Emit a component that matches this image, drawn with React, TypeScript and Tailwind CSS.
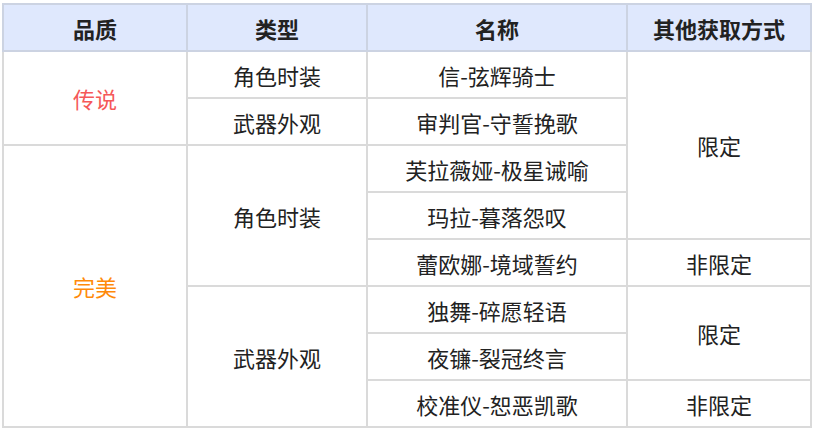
const rows = [
  { name: "信-弦辉骑士" },
  { name: "审判官-守誓挽歌" },
  { name: "芙拉薇娅-极星诫喻" },
  { name: "玛拉-暮落怨叹" },
  { name: "蕾欧娜-境域誓约" },
  { name: "独舞-碎愿轻语" },
  { name: "夜镰-裂冠终言" },
  { name: "校准仪-恕恶凯歌" },
];

const td = "border-2 border-[#dadada] text-center align-middle h-[47px] p-0";
const th = "border-2 border-[#ccd3e2] bg-[#dfe8fd] text-center align-middle h-[47px] p-0 font-bold";

export default function App() {
  return (
    <div
      className="w-[813px] h-[433px] bg-white pl-[2px] pt-[3px] text-[22px] text-[#222]"
      style={{ fontFamily: '"Noto Sans CJK SC", "Noto Sans", sans-serif' }}
    >
      <table className="border-collapse table-fixed w-[808px] leading-none">
        <colgroup>
          <col className="w-[184px]" />
          <col className="w-[180px]" />
          <col className="w-[260px]" />
          <col className="w-[184px]" />
        </colgroup>
        <thead>
          <tr>
            <th className={th}>品质</th>
            <th className={th}>类型</th>
            <th className={th}>名称</th>
            <th className={th}>其他获取方式</th>
          </tr>
        </thead>
        <tbody>
          <tr>
            <td rowSpan={2} className={`${td} text-[#f55858]`}>传说</td>
            <td className={td}>角色时装</td>
            <td className={td}>{rows[0].name}</td>
            <td rowSpan={4} className={td}>限定</td>
          </tr>
          <tr>
            <td className={td}>武器外观</td>
            <td className={td}>{rows[1].name}</td>
          </tr>
          <tr>
            <td rowSpan={6} className={`${td} text-[#ff8a0a]`}>完美</td>
            <td rowSpan={3} className={td}>角色时装</td>
            <td className={td}>{rows[2].name}</td>
          </tr>
          <tr>
            <td className={td}>{rows[3].name}</td>
          </tr>
          <tr>
            <td className={td}>{rows[4].name}</td>
            <td className={td}>非限定</td>
          </tr>
          <tr>
            <td rowSpan={3} className={td}>武器外观</td>
            <td className={td}>{rows[5].name}</td>
            <td rowSpan={2} className={td}>限定</td>
          </tr>
          <tr>
            <td className={td}>{rows[6].name}</td>
          </tr>
          <tr>
            <td className={td}>{rows[7].name}</td>
            <td className={td}>非限定</td>
          </tr>
        </tbody>
      </table>
    </div>
  );
}
